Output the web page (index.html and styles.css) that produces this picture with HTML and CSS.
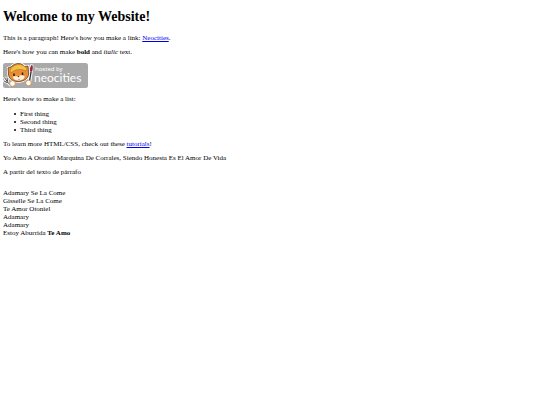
FILE: index.html
```html
<!DOCTYPE html>
<html lang="en">
<head>
<meta charset="utf-8">
<title>My Website</title>
<link rel="stylesheet" href="styles.css">
</head>
<body>
<h1>Welcome to my Website!</h1>
<p>This is a paragraph! Here's how you make a link: <a href="#neocities">Neocities</a>.</p>
<p>Here's how you can make <strong>bold</strong> and <em>italic</em> text.</p>
<svg class="badge" viewBox="0 0 85 25" role="img" aria-label="hosted by neocities">
  <rect x="0" y="0" width="85" height="25" rx="2.5" fill="#a9a9a9"/>
  <!-- fork -->
  <path d="M1.500 15l3 4M1 18l3 1.500M4 15l1 4M4 19l3 3" stroke="#eee" stroke-width="2.6" fill="none" stroke-linecap="round"/>
  <path d="M1.500 14.500l3 4.500M1 18l3 1.500M4 14.500l.7 4M4 19l4 3" stroke="#555" stroke-width="1" fill="none"/>
  <!-- brush -->
  <path d="M28.500 3l-2 15" stroke="#eee" stroke-width="4" stroke-linecap="round"/>
  <path d="M28 9l-1.500 9" stroke="#333" stroke-width="1.300"/>
  <path d="M29 1.500c1.500 2.500 1 5.500-.8 8-2.200-2-1.500-5 .8-8z" fill="#98293a"/>
  <!-- cat -->
  <path d="M5 5l3.500-1.500c4-4 10-4 13 0l3.500-.5.5 6c1 5-3 9-9 9.500S5 16 5.500 10z" fill="#fff" stroke="#fff" stroke-width="2.400" stroke-linejoin="round"/>
  <path d="M5 5l3.500-1.500c4-4 10-4 13 0l3.500-.5.5 6c1 5-3 9-9 9.500S5 16 5.500 10z" fill="#e88f35" stroke="#5b3a20" stroke-width=".8"/>
  <path d="M7 8c2-7.500 13-9 17-2l-1 2C18 5.500 12 6 8 10z" fill="#f5c044" stroke="#8d5a22" stroke-width=".4"/>
  <path d="M9.500 14c2-1.500 4 0 6-1 2-1 4-1 6 0 .5 3-3.500 4.500-6 4.500s-5-1-6-3.500z" fill="#fff2df"/>
  <path d="M11 10.500v2.500M19.500 9.500v2.500" stroke="#2c1a12" stroke-width="1.500"/>
  <path d="M14.300 13h2.200l-1 1.500zM13 15.500q3 2 5-.5l-2 2z" fill="#6b2a1a"/>
  <circle cx="9.500" cy="20.500" r="2.800" fill="#fff" stroke="#c98a48" stroke-width=".8"/>
  <circle cx="25.500" cy="20" r="2.800" fill="#fff" stroke="#c98a48" stroke-width=".8"/>
  <text class="badge-small" x="32" y="8">hosted by</text>
  <text class="badge-name" x="31" y="19">neocities</text>
</svg>
<p>Here's how to make a list:</p>
<ul>
  <li>First thing</li>
  <li>Second thing</li>
  <li>Third thing</li>
</ul>
<p>To learn more HTML/CSS, check out these <a href="#tutorials">tutorials</a>!</p>
<p>Yo Amo A Otoniel Marquina De Corrales, Siendo Honesta Es El Amor De Vida</p>
<p>A partir del texto de párrafo</p>
<div class="verses">
  Adamary Se La Come<br>
  Gisselle Se La Come<br>
  Te Amor Otoniel<br>
  Adamary<br>
  Adamary<br>
  Estoy Aburrida <strong>Te Amo</strong>
</div>
</body>
</html>
```
FILE: styles.css
```css
body {
  margin: 9px 3px 3px;
  background: #fff;
  color: #000;
  font: 7px/8px "Liberation Serif", "Times New Roman", serif;
}

h1 {
  margin: 0 0 9px;
  font-size: 14px;
  line-height: 16px;
}

p {
  margin: 6px 0;
}

a {
  color: #0000ee;
}

.badge {
  display: block;
  width: 85px;
  height: 25px;
  margin: 7px 0;
}

.badge-small,
.badge-name {
  fill: #fff;
}

.badge-small {
  font-family: "Noto Sans", sans-serif;
  font-size: 6px;
}

.badge-name {
  font-family: Lato, sans-serif;
  font-size: 12px;
}

ul {
  margin: 7px 0 6px;
  padding-left: 17px;
  list-style: none;
}

li::before {
  content: "";
  display: inline-block;
  width: 2px;
  height: 2px;
  margin: 0 4px 1px -6px;
  border-radius: 50%;
  background: #000;
}

.verses {
  margin-top: 13px;
}
```
